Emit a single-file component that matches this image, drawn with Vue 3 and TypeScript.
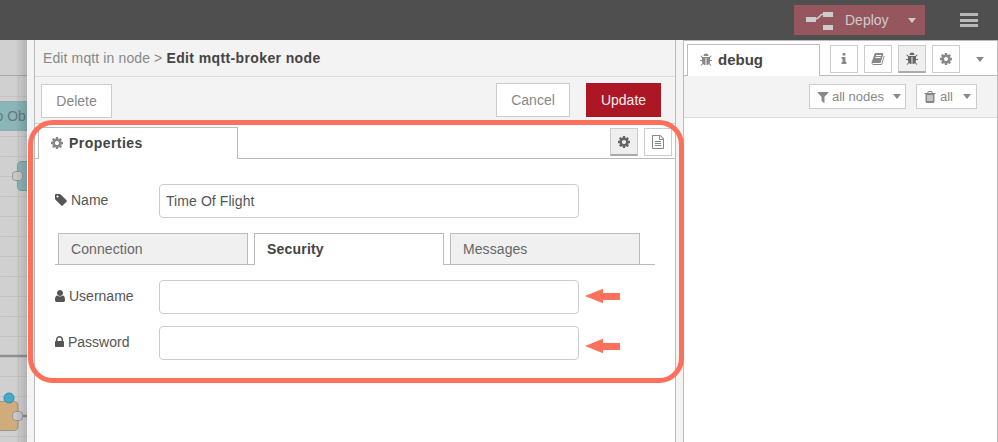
<script setup lang="ts">
import { ref } from 'vue'

const icons: Record<string, string> = {
  cog: 'M1152 896q0-106-75-181t-181-75-181 75-75 181 75 181 181 75 181-75 75-181zm512-109v222q0 12-8 23t-20 13l-185 28q-19 54-39 91 35 50 107 138 10 12 10 25t-9 23q-27 37-99 108t-94 71q-12 0-26-9l-138-108q-44 23-91 38-16 136-29 186-7 28-36 28h-222q-14 0-24.5-8.5t-11.5-21.5l-28-184q-49-16-90-37l-141 107q-10 9-25 9-14 0-25-11-126-114-165-168-7-10-7-23 0-12 8-23 15-21 51-66.5t54-70.5q-27-50-41-99l-183-27q-13-2-21-12.5t-8-23.5v-222q0-12 8-23t19-13l186-28q14-46 39-92-40-57-107-138-10-12-10-24 0-10 9-23 26-36 98.5-107.5t94.5-71.5q13 0 26 10l138 107q44-23 91-38 16-136 29-186 7-28 36-28h222q14 0 24.5 8.5t11.5 21.5l28 184q49 16 90 37l142-107q9-9 24-9 13 0 25 10 129 119 165 170 7 8 7 22 0 12-8 23-15 21-51 66.5t-54 70.5q26 50 41 98l183 28q13 2 21 12.5t8 23.5z',
  tag: 'M576 448q0-53-37.5-90.5t-90.5-37.5-90.5 37.5-37.5 90.5 37.5 90.5 90.5 37.5 90.5-37.5 37.5-90.5zm1067 576q0 53-37 90l-491 492q-39 37-91 37-53 0-90-37l-715-716q-38-37-64.5-101t-26.5-117v-416q0-52 38-90t90-38h416q53 0 117 26.5t102 64.5l715 714q37 39 37 91z',
  user: 'M1536 1399q0 109-62.5 187t-150.5 78h-854q-88 0-150.5-78t-62.5-187q0-85 8.5-160.5t31.5-152 58.5-131 94-89 134.5-34.5q131 128 313 128t313-128q76 0 134.5 34.5t94 89 58.5 131 31.5 152 8.5 160.5zm-256-887q0 159-112.5 271.5t-271.5 112.5-271.5-112.5-112.5-271.5 112.5-271.5 271.5-112.5 271.5 112.5 112.5 271.5z',
  lock: 'M640 768h512v-192q0-106-75-181t-181-75-181 75-75 181v192zm832 96v576q0 40-28 68t-68 28h-960q-40 0-68-28t-28-68v-576q0-40 28-68t68-28h32v-192q0-184 132-316t316-132 316 132 132 316v192h32q40 0 68 28t28 68z',
  file: 'M1596 380q28 28 48 76t20 88v1152q0 40-28 68t-68 28h-1344q-40 0-68-28t-28-68v-1600q0-40 28-68t68-28h896q40 0 88 20t76 48zm-444-244v376h376q-10-29-22-41l-313-313q-12-12-41-22zm384 1528v-1024h-416q-40 0-68-28t-28-68v-416h-768v1536h1280zm-1024-864q0-14 9-23t23-9h704q14 0 23 9t9 23v64q0 14-9 23t-23 9h-704q-14 0-23-9t-9-23v-64zm736 224q14 0 23 9t9 23v64q0 14-9 23t-23 9h-704q-14 0-23-9t-9-23v-64q0-14 9-23t23-9h704zm0 256q14 0 23 9t9 23v64q0 14-9 23t-23 9h-704q-14 0-23-9t-9-23v-64q0-14 9-23t23-9h704z',
  info: 'M1216 1344v128q0 26-19 45t-45 19h-512q-26 0-45-19t-19-45v-128q0-26 19-45t45-19h64v-384h-64q-26 0-45-19t-19-45v-128q0-26 19-45t45-19h384q26 0 45 19t19 45v576h64q26 0 45 19t19 45zm-128-1152v192q0 26-19 45t-45 19h-256q-26 0-45-19t-19-45v-192q0-26 19-45t45-19h256q26 0 45 19t19 45z',
  book: 'M1703 478q40 57 18 129l-275 906q-19 64-76.5 107.5t-122.5 43.5h-923q-77 0-148.5-53.5t-99.5-131.5q-24-67-2-127 0-4 3-27t4-37q1-8-3-21.5t-3-19.5q2-11 8-21t16.5-23.5 16.5-23.5q23-38 45-91.5t30-91.5q3-10 .5-30t-.5-28q3-11 17-28t17-23q21-36 42-92t25-90q1-9-2.5-32t.5-28q4-13 22-30.5t22-22.5q19-26 42.5-84.5t27.5-96.5q1-8-3-25.5t-2-26.5q2-8 9-18t18-23 17-21q8-12 16.5-30.5t15-35 16-36 19.5-32 26.5-23.5 36-11.5 47.5 5.5l-1 3q38-9 51-9h761q74 0 114 56t18 130l-274 906q-36 119-71.5 153.5t-128.5 34.5h-869q-27 0-38 15-11 16-1 43 24 70 144 70h923q29 0 56-15.5t35-41.5l300-987q7-22 5-57 38 15 59 43zm-1064 2q-4 13 2 22.5t20 9.5h608q13 0 25.5-9.5t16.5-22.5l21-64q4-13-2-22.5t-20-9.5h-608q-13 0-25.5 9.5t-16.5 22.5zm-83 256q-4 13 2 22.5t20 9.5h608q13 0 25.5-9.5t16.5-22.5l21-64q4-13-2-22.5t-20-9.5h-608q-13 0-25.5 9.5t-16.5 22.5z',
  bug: 'M1696 960q0 26-19 45t-45 19h-224q0 171-67 290l208 209q19 19 19 45t-19 45q-18 19-45 19t-45-19l-198-197q-5 5-15 13t-42 28.5-65 36.5-82 29-97 13v-896h-128v896q-51 0-101.5-13.5t-87-33-66-39-43.5-32.5l-15-14-183 207q-20 21-48 21-24 0-43-16-19-18-20.5-44.5t15.5-46.5l202-227q-58-114-58-274h-224q-26 0-45-19t-19-45 19-45 45-19h224v-294l-173-173q-19-19-19-45t19-45 45-19 45 19l173 173h844l173-173q19-19 45-19t45 19 19 45-19 45l-173 173v294h224q26 0 45 19t19 45zm-480-576h-640q0-133 93.5-226.5t226.5-93.5 226.5 93.5 93.5 226.5z',
  filter: 'M1595 295q17 41-14 70l-493 493v742q0 42-39 59-13 5-25 5-27 0-45-19l-256-256q-19-19-19-45v-486l-493-493q-31-29-14-70 17-39 59-39h1280q42 0 59 39z',
  trash: 'M704 1376v-704q0-14-9-23t-23-9h-64q-14 0-23 9t-9 23v704q0 14 9 23t23 9h64q14 0 23-9t9-23zm256 0v-704q0-14-9-23t-23-9h-64q-14 0-23 9t-9 23v704q0 14 9 23t23 9h64q14 0 23-9t9-23zm256 0v-704q0-14-9-23t-23-9h-64q-14 0-23 9t-9 23v704q0 14 9 23t23 9h64q14 0 23-9t9-23zm-544-992h448l-48-117q-7-9-17-11h-317q-10 2-17 11zm928 32v64q0 14-9 23t-23 9h-96v948q0 83-47 143.5t-113 60.5h-832q-66 0-113-58.5t-47-141.5v-952h-96q-14 0-23-9t-9-23v-64q0-14 9-23t23-9h309l70-167q15-37 54-63t79-26h320q40 0 79 26t54 63l70 167h309q14 0 23 9t9 23z',
}

const name = ref<string>('Time Of Flight')
const username = ref<string>('')
const password = ref<string>('')
const tabs: string[] = ['Connection', 'Security', 'Messages']
const activeTab = ref<string>('Security')
const sideIcons: string[] = ['info', 'book', 'bug', 'cog']
const gridRows: number[] = Array.from({ length: 18 }, (_, i) => 96 + i * 20)
</script>

<template>
  <div class="app">
    <header class="header">
      <div class="deploy">
        <svg class="deploy-icon" width="28" height="20" viewBox="0 0 28 20">
          <path d="M9 9C15 9 12 4 18 4" fill="none" stroke="#ccc" stroke-width="1.500" />
          <path d="M0 7h10v5H0zM17 2h10v5H17zM17 15h10v5H17z" fill="#ccc" />
        </svg>
        <span>Deploy</span>
        <i class="caret light"></i>
      </div>
      <div class="menu"><i></i><i></i><i></i></div>
    </header>

    <main class="main">
      <svg class="canvas" width="27" height="402" viewBox="0 40 27 402">
        <defs>
          <linearGradient id="shade">
            <stop offset="0" stop-color="#000" stop-opacity="0" />
            <stop offset="1" stop-color="#000" stop-opacity=".14" />
          </linearGradient>
        </defs>
        <rect y="40" width="27" height="402" fill="#d0d0d0" />
        <path v-for="y in gridRows" :key="y" :d="`M0 ${y + 0.5}H27`" stroke="#c3c3c3" />
        <path d="M18.500 76V442" stroke="#c5c5c5" />
        <path d="M0 75.500H27" stroke="#aaa" />
        <path d="M0 101.500H27V130.500H0" fill="#8ab6b8" stroke="#91a9aa" />
        <text x="-4.500" y="121" class="node-label">o Ob</text>
        <path d="M27 161.500H22Q17.500 161.500 17.500 166V186Q17.500 190.500 22 190.500H27" fill="#8ab6b8" stroke="#829b9c" />
        <rect x="12.500" y="171.500" width="10" height="9" rx="3" fill="#c8c8c8" stroke="#969696" />
        <path d="M0 356H27" stroke="#929292" stroke-width="2.500" />
        <path d="M18 416H27" stroke="#8f8f8f" stroke-width="2.500" />
        <path d="M0 401.500H14Q18 401.500 18 405V426Q18 430.500 14 430.500H0" fill="#d0ac7b" stroke="#9c9587" />
        <rect x="12.500" y="411.500" width="10" height="9" rx="3" fill="#c8c8c8" stroke="#969696" />
        <circle cx="9" cy="398" r="5" fill="#45a9c9" stroke="#348ca8" />
        <rect x="15" y="40" width="12" height="402" fill="url(#shade)" />
      </svg>

      <section class="tray">
        <div class="title">Edit mqtt in node &gt; <b>Edit mqtt-broker node</b></div>
        <div class="toolbar">
          <button class="btn delete">Delete</button>
          <button class="btn cancel">Cancel</button>
          <button class="btn update">Update</button>
        </div>
        <div class="prop-tabs">
          <div class="prop-tab">
            <svg class="icon" viewBox="0 0 1792 1792"><path :d="icons.cog" /></svg>
            <b>Properties</b>
          </div>
          <div class="tab-actions">
            <button class="square on"><svg class="icon" viewBox="0 0 1792 1792"><path :d="icons.cog" /></svg></button>
            <button class="square"><svg class="icon" viewBox="0 0 1792 1792"><path :d="icons.file" /></svg></button>
          </div>
        </div>
        <form class="form" @submit.prevent>
          <div class="row">
            <label><svg class="icon tag" viewBox="0 0 1792 1792"><path :d="icons.tag" /></svg>Name</label>
            <input v-model="name" type="text" />
          </div>
          <div class="tabs">
            <div
              v-for="t in tabs"
              :key="t"
              class="tab"
              :class="{ active: t === activeTab }"
              @click="activeTab = t"
            >{{ t }}</div>
          </div>
          <div class="row second">
            <label><svg class="icon user" viewBox="256 0 1280 1792"><path :d="icons.user" /></svg>Username</label>
            <input v-model="username" type="text" />
          </div>
          <div class="row third">
            <label><svg class="icon lock" viewBox="320 0 1152 1792"><path :d="icons.lock" /></svg>Password</label>
            <input v-model="password" type="password" />
          </div>
        </form>
      </section>

      <aside class="sidebar">
        <div class="side-tabs">
          <div class="side-tab">
            <svg class="icon" viewBox="0 0 1792 1792"><path :d="icons.bug" /></svg>
            <b>debug</b>
          </div>
          <div class="side-actions">
            <button v-for="i in sideIcons" :key="i" class="square" :class="{ on: i === 'bug' }">
              <svg class="icon" viewBox="0 0 1792 1792"><path :d="icons[i]" /></svg>
            </button>
            <i class="caret"></i>
          </div>
        </div>
        <div class="filters">
          <button class="filter nodes">
            <svg class="icon" viewBox="0 0 1792 1792"><path :d="icons.filter" /></svg>
            <span>all nodes</span><i class="caret"></i>
          </button>
          <button class="filter clear">
            <svg class="icon" viewBox="0 0 1792 1792"><path :d="icons.trash" /></svg>
            <span>all</span><i class="caret"></i>
          </button>
        </div>
      </aside>
    </main>

    <div class="highlight"></div>
    <svg class="arrow first-arrow" width="35" height="16" viewBox="0 0 35 16"><path d="M0 8L18 .8V5H35V12H18V15.200Z" fill="#fd705c" /></svg>
    <svg class="arrow second-arrow" width="35" height="16" viewBox="0 0 35 16"><path d="M0 8L18 .8V5H35V12H18V15.200Z" fill="#fd705c" /></svg>
  </div>
</template>

<style>
body {
  margin: 0;
  overflow: hidden;
}
</style>

<style scoped>
* {
  box-sizing: border-box;
}
.app {
  position: relative;
  width: 998px;
  height: 442px;
  display: flex;
  flex-direction: column;
  overflow: hidden;
  background: #f3f3f3;
  color: #888;
  font: 14px/20px "Liberation Sans", Arial, sans-serif;
}
button {
  font: inherit;
  color: inherit;
  padding: 0;
  margin: 0;
}
.icon {
  width: 14px;
  height: 14px;
  fill: currentColor;
  flex: none;
}
.caret {
  width: 0;
  height: 0;
  border: 4px solid transparent;
  border-top: 5px solid #888;
  border-bottom: 0;
}
.caret.light {
  border-width: 5px 4.500px 0;
  border-top-color: #ccc;
}
.header {
  height: 40px;
  flex: none;
  background: #4f4f4f;
  display: flex;
  justify-content: flex-end;
  align-items: flex-start;
  padding: 5px 20px 0 0;
}
.deploy {
  width: 131px;
  height: 30px;
  background: #96565e;
  color: #ccc;
  display: flex;
  align-items: center;
  padding-left: 12px;
}
.deploy-icon {
  margin-right: 11px;
}
.deploy span {
  width: 63px;
}
.menu {
  width: 18px;
  height: 14px;
  margin: 8px 0 0 35px;
  display: flex;
  flex-direction: column;
  justify-content: space-between;
}
.menu i {
  height: 3px;
  background: #b9b9b9;
}
.main {
  flex: 1;
  display: flex;
}
.canvas {
  flex: none;
}
.node-label {
  font: 14px "Liberation Sans", Arial, sans-serif;
  fill: #66797a;
}
.tray {
  width: 642px;
  margin: 0 7px;
  border: solid #bbb;
  border-width: 0 1px;
  background: #fff;
  flex: none;
}
.title {
  height: 37px;
  padding: 8px 8px 0;
  background: #f3f3f3;
  border-bottom: 1px solid #ddd;
  letter-spacing: 0.120px;
}
.title b,
.prop-tab b,
.side-tab b {
  color: #444;
}
.title b {
  letter-spacing: 0.380px;
}
.toolbar {
  height: 46px;
  background: #f3f3f3;
  display: flex;
  padding: 6px 14px 0 6px;
}
.btn {
  height: 34px;
  background: #fff;
  border: 1px solid #ccc;
}
.delete {
  width: 71px;
  margin: 1px auto 0 0;
}
.cancel {
  width: 74px;
  margin-right: 16px;
}
.update {
  width: 75px;
  background: #ad1625;
  border-color: #ad1625;
  color: #eee;
}
.prop-tabs {
  height: 36px;
  border-top: 1px solid #ccc;
  border-bottom: 1px solid #bbb;
  display: flex;
  justify-content: space-between;
  padding: 3px 3px 0;
}
.prop-tab {
  width: 200px;
  height: 32px;
  border: 1px solid #bbb;
  border-bottom: 0;
  background: #fff;
  display: flex;
  align-items: center;
  gap: 5px;
  padding: 0 0 2px 11px;
}
.prop-tab b {
  letter-spacing: 0.450px;
}
.tab-actions,
.side-actions {
  display: flex;
  gap: 6px;
}
.tab-actions {
  padding-top: 1px;
}
.square {
  width: 28px;
  height: 28px;
  background: #fff;
  border: 1px solid #ccc;
  display: flex;
  align-items: center;
  justify-content: center;
}
.square.on {
  background: #efefef;
  border-bottom: 2px solid #aaa;
  color: #666;
}
.form {
  padding: 25px 20px 0;
  color: #555;
}
.row {
  height: 34px;
  display: flex;
}
.row label {
  width: 104px;
  padding-top: 6px;
  display: flex;
  align-items: flex-start;
}
.tag {
  margin: 3px 3px 0 -1px;
}
.user {
  width: 10px;
  margin: 3px 4px 0 0;
}
.lock {
  width: 9px;
  margin: 3px 4px 0 0;
}
.row input {
  width: 420px;
  height: 34px;
  border: 1px solid #ccc;
  border-radius: 4px;
  padding: 0 6px;
  font: inherit;
  letter-spacing: 0.080px;
  color: #555;
  outline: 0;
  background: #fff;
}
.tabs {
  width: 600px;
  height: 32px;
  margin-top: 15px;
  border-bottom: 1px solid #bbb;
  display: flex;
  gap: 6px;
  padding-left: 3px;
}
.tab {
  width: 190px;
  height: 31px;
  border: 1px solid #bbb;
  border-bottom: 0;
  background: #f0f0f0;
  color: #666;
  padding: 5px 12px;
  letter-spacing: 0.080px;
}
.tab.active {
  height: 32px;
  background: #fff;
  color: #444;
  font-weight: bold;
  letter-spacing: 0.200px;
}
.second {
  margin-top: 15px;
}
.third {
  margin-top: 12px;
}
.sidebar {
  width: 315px;
  border: 1px solid #bbb;
  border-bottom: 0;
  background: #fff;
}
.side-tabs {
  height: 35px;
  border-bottom: 1px solid #bbb;
  display: flex;
  padding: 3px 0 0 3px;
}
.side-tab {
  width: 133px;
  height: 32px;
  background: #fff;
  border: 1px solid #bbb;
  border-bottom: 0;
  display: flex;
  align-items: center;
  gap: 5px;
  padding: 0 0 1px 11px;
}
.side-tab b {
  font-size: 15px;
}
.side-actions {
  padding: 1px 0 0 10px;
}
.side-actions .caret {
  margin: 12px 0 0 10px;
}
.filters {
  height: 42px;
  background: #f3f3f3;
  border-bottom: 1px solid #ddd;
  display: flex;
  justify-content: flex-end;
  gap: 10px;
  padding: 8px 20px 0 0;
}
.filter {
  height: 25px;
  border: 1px solid #ccc;
  background: #fff;
  display: flex;
  align-items: center;
  padding-left: 6px;
  font-size: 13px;
}
.filter .icon {
  margin-right: 2px;
}
.nodes {
  width: 97px;
}
.nodes span {
  width: 61px;
  text-align: left;
}
.clear {
  width: 61px;
}
.clear .icon {
  margin-right: 3px;
}
.clear span {
  width: 23px;
  text-align: left;
}
.highlight {
  position: absolute;
  left: 28px;
  top: 120px;
  width: 656px;
  height: 263px;
  border: 5px solid #fd705c;
  border-radius: 25px;
}
.arrow {
  position: absolute;
  left: 585px;
}
.first-arrow {
  top: 288px;
}
.second-arrow {
  top: 338px;
}
</style>
